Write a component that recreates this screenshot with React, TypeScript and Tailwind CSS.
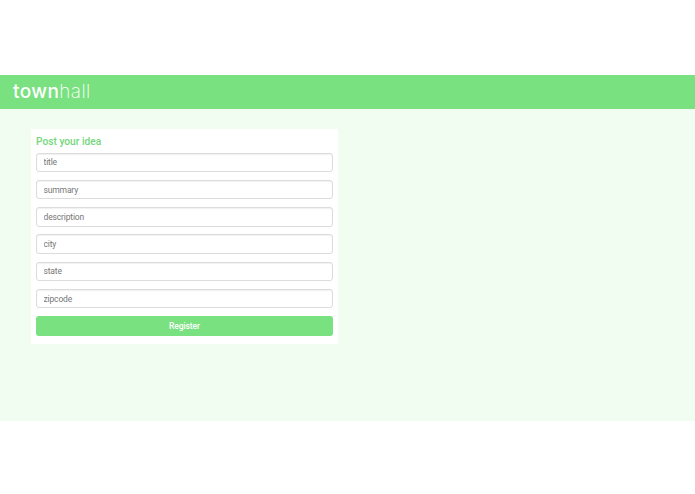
const fields = ["title", "summary", "description", "city", "state", "zipcode"];

const App = () => {
  return (
    <div className="min-h-[494px] bg-white pt-[75px] font-['Roboto',sans-serif]">
      <header className="h-[34px] bg-[#79e17f] pl-[13px] flex items-center pb-[1px]">
        <span className="text-[19px] leading-none tracking-[0.4px] text-white font-['Inter',sans-serif]">
          <span className="font-medium">town</span>
          <span className="font-extralight">hall</span>
        </span>
      </header>
      <main className="h-[312px] bg-[#f2fdf2] pl-[31px] pt-[20px]">
        <div className="w-[307px] h-[215px] bg-white px-[5px] pt-[6px]">
          <h2 className="text-[10.2px] leading-[14px] font-medium text-[#74d67b] mb-[3.5px]">Post your idea</h2>
          <form className="flex flex-col gap-[7.8px]">
            {fields.map((f) => (
              <input
                key={f}
                placeholder={f}
                className="w-full h-[19.5px] rounded-[3px] border border-[#dcdcdc] bg-white px-[6.5px] text-[8.5px] tracking-[-0.15px] text-[#555] placeholder:text-[#777] shadow-[inset_0_1px_1px_rgba(0,0,0,0.06)]"
              />
            ))}
            <button type="button" className="w-full h-[19.5px] rounded-[3px] bg-[#79e17f] text-[8.5px] tracking-[-0.1px] font-medium text-white">
              Register
            </button>
          </form>
        </div>
      </main>
    </div>
  );
};

export default App;
